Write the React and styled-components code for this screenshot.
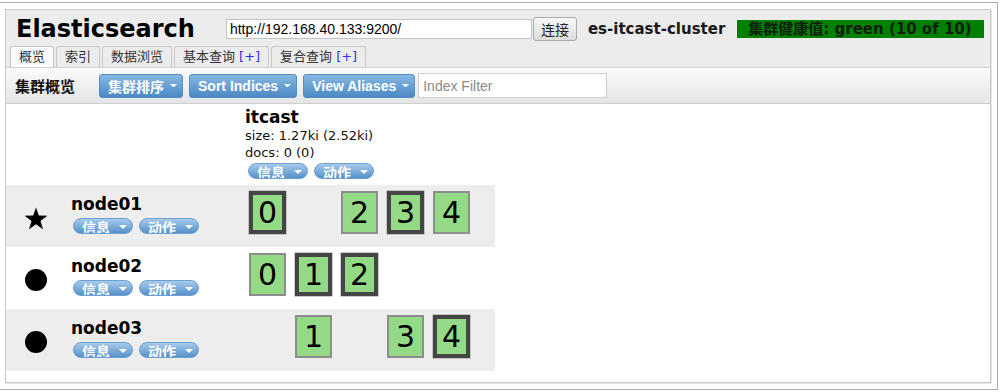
import React from 'react';
import styled, { createGlobalStyle } from 'styled-components';

const GlobalStyle = createGlobalStyle`
  html, body {
    margin: 0;
    padding: 0;
    background: #ffffff;
    font-family: "DejaVu Sans", "Noto Sans CJK SC", sans-serif;
    color: #000;
  }
`;

const CJK = `"DejaVu Sans", "Noto Sans CJK SC", sans-serif`;
const ARIAL_CJK = `"Liberation Sans", "Noto Sans CJK SC", sans-serif`;

const Frame = styled.div`
  box-sizing: border-box;
  width: 999px;
  height: 388px;
  margin: 2px 0 0 -1px;
  padding: 6px 0 0 5px;
  border: 1px solid #a9a9a9;
`;

const Panel = styled.div`
  box-sizing: border-box;
  width: 986px;
  height: 374px;
  border: 1px solid #c9c9c9;
  box-shadow: 1px 1px 0 #e4e4e4;
  display: flex;
  flex-direction: column;
  background: #fff;
`;

const Header = styled.div`
  background: #ececec;
  padding: 4px 0 0 4px;
`;

const TopRow = styled.div`
  display: flex;
  align-items: center;
  height: 30px;
  padding-left: 6px;
`;

const Title = styled.h1`
  margin: 0 31px 0 0;
  font-size: 24px;
  line-height: 30px;
  font-weight: bold;
  font-family: "DejaVu Sans", sans-serif;
`;

const UrlInput = styled.input`
  box-sizing: border-box;
  width: 306px;
  height: 20px;
  border: 1px solid #c4c4c4;
  padding: 0 3px;
  font-family: "Liberation Sans", Arial, sans-serif;
  font-size: 14px;
  color: #000;
  background: #fff;
  outline: none;
`;

const ConnectButton = styled.button`
  box-sizing: border-box;
  height: 24px;
  width: 44px;
  margin-left: 1px;
  padding: 0;
  border: 1px solid #ababab;
  border-radius: 3px;
  background: linear-gradient(#f8f8f8, #dcdcdc);
  font-family: "Noto Sans CJK SC", sans-serif;
  font-size: 14px;
  color: #222;
`;

const ClusterName = styled.span`
  margin-left: 11px;
  font-size: 15px;
  font-weight: bold;
  color: #1a1a1a;
`;

const Health = styled.span`
  margin-left: 12px;
  height: 18px;
  line-height: 18px;
  padding: 0 12px 0 11px;
  background: #008000;
  color: #102010;
  font-size: 15px;
  font-weight: bold;
  font-family: ${CJK};
`;

const Tabs = styled.div`
  display: flex;
  gap: 2px;
  margin-top: 2px;
  height: 21px;
`;

const Tab = styled.div`
  box-sizing: border-box;
  height: 21px;
  padding: 0 8px;
  border: 1px solid #c8c8c8;
  border-bottom: none;
  border-radius: 3px 3px 0 0;
  background: ${(p) => (p.$active ? '#fafafa' : '#ececec')};
  font-family: ${CJK};
  font-size: 13px;
  line-height: 20px;
  color: #333;
`;

const Plus = styled.span`
  color: #3030f0;
  margin-left: 4px;
`;

const Toolbar = styled.div`
  box-sizing: border-box;
  height: 37px;
  display: flex;
  align-items: center;
  padding-left: 9px;
  border-top: 1px solid #cfcfcf;
  border-bottom: 1px solid #cfcfcf;
  background: linear-gradient(#fbfbfb, #e3e5e7);
`;

const ToolbarLabel = styled.span`
  font-family: ${CJK};
  font-size: 15px;
  font-weight: bold;
  margin-right: 24px;
  color: #111;
`;

const MenuButton = styled.button`
  box-sizing: border-box;
  height: 24px;
  display: flex;
  align-items: center;
  gap: 6px;
  padding: 0 5px 0 8px;
  margin-right: ${(p) => p.$gap || 6}px;
  border: 1px solid #5a8cbf;
  border-radius: 3px;
  background: linear-gradient(#86b8e4, #4c89c4);
  color: #fff;
  font-family: ${ARIAL_CJK};
  font-size: 14px;
  font-weight: bold;
`;

const Caret = ({ size = 7 }) => (
  <svg width={size} height={size / 2} viewBox="0 0 8 4">
    <polygon points="0,0 8,0 4,4" fill="#fff" />
  </svg>
);

const FilterInput = styled.input`
  box-sizing: border-box;
  width: 189px;
  height: 25px;
  border: 1px solid #cdcdcd;
  padding: 0 4px;
  font-family: "Liberation Sans", Arial, sans-serif;
  font-size: 14px;
  background: #fff;
  outline: none;

  &::placeholder {
    color: #8a8a8a;
  }
`;

const Content = styled.div`
  flex: 1;
  background: #fff;
`;

const Grid = styled.div`
  width: 489px;
`;

const Row = styled.div`
  display: grid;
  grid-template-columns: 239px 250px;
  height: ${(p) => p.$height || 62}px;
  background: ${(p) => (p.$shade ? '#ededed' : '#fff')};
`;

const NodeCell = styled.div`
  display: flex;
`;

const IconWrap = styled.div`
  width: 60px;
  display: flex;
  align-items: center;
  justify-content: center;
  padding-top: 4px;
`;

const Dot = styled.div`
  width: 22px;
  height: 22px;
  border-radius: 50%;
  background: #000;
`;

const NodeInfo = styled.div`
  padding: 9px 0 0 5px;
`;

const NodeName = styled.div`
  font-size: 17px;
  line-height: 20px;
  font-weight: bold;
`;

const Pills = styled.div`
  display: flex;
  gap: 6px;
  margin: ${(p) => p.$margin || '4px 0 0 2px'};
`;

const Pill = styled.div`
  box-sizing: border-box;
  width: 60px;
  height: 16px;
  display: flex;
  align-items: flex-start;
  padding: 1px 0 0 8px;
  overflow: hidden;
  border: 1px solid #6d9fcf;
  border-radius: 8px;
  background: linear-gradient(#a6cbec, #5691ca);
  color: #fff;
  font-family: ${CJK};
  font-size: 14px;
  line-height: 16px;
  font-weight: bold;

  svg {
    margin: 5px 0 0 9px;
    flex: none;
  }
`;

const IndexHead = styled.div`
  padding-top: 3px;
`;

const IndexName = styled.div`
  font-size: 17px;
  line-height: 20px;
  font-weight: bold;
`;

const IndexStat = styled.div`
  font-size: 13px;
  line-height: 17px;
  color: #111;
`;

const ShardCell = styled.div`
  display: flex;
  gap: 9px;
  padding: 6px 0 0 4px;
`;

const Shard = styled.div`
  box-sizing: border-box;
  width: 37px;
  height: 43px;
  display: flex;
  align-items: center;
  justify-content: center;
  border: ${(p) => (p.$primary ? '4px solid #454545' : '2px solid #8d8d8d')};
  box-shadow: ${(p) => (p.$primary ? '0 0 0 0.5px #9a9a9a' : 'none')};
  background: #94d985;
  font-size: 30px;
  line-height: 1;
  color: #000;
  visibility: ${(p) => (p.$empty ? 'hidden' : 'visible')};
`;

const Star = () => (
  <svg width="24" height="23" viewBox="0 0 24 23">
    <polygon
      points="12,0.5 14.8,8.6 23.4,8.7 16.5,13.9 19,22.3 12,17.3 5,22.3 7.5,13.9 0.6,8.7 9.2,8.6"
      fill="#000"
    />
  </svg>
);

const nodes = [
  { name: 'node01', master: true, shards: [[0, true], null, [2, false], [3, true], [4, false]] },
  { name: 'node02', shards: [[0, false], [1, true], [2, true], null, null] },
  { name: 'node03', shards: [null, [1, false], null, [3, false], [4, true]] },
];

function PillButtons({ margin }) {
  return (
    <Pills $margin={margin}>
      <Pill>
        信息
        <Caret size={8} />
      </Pill>
      <Pill>
        动作
        <Caret size={8} />
      </Pill>
    </Pills>
  );
}

function App() {
  return (
    <>
      <GlobalStyle />
      <Frame>
        <Panel>
          <Header>
            <TopRow>
              <Title>Elasticsearch</Title>
              <UrlInput defaultValue="http://192.168.40.133:9200/" />
              <ConnectButton>连接</ConnectButton>
              <ClusterName>es-itcast-cluster</ClusterName>
              <Health>集群健康值: green (10 of 10)</Health>
            </TopRow>
            <Tabs>
              <Tab $active>概览</Tab>
              <Tab>索引</Tab>
              <Tab>数据浏览</Tab>
              <Tab>
                基本查询<Plus>[+]</Plus>
              </Tab>
              <Tab>
                复合查询<Plus>[+]</Plus>
              </Tab>
            </Tabs>
          </Header>
          <Toolbar>
            <ToolbarLabel>集群概览</ToolbarLabel>
            <MenuButton>
              集群排序
              <Caret />
            </MenuButton>
            <MenuButton>
              Sort Indices
              <Caret />
            </MenuButton>
            <MenuButton $gap={3}>
              View Aliases
              <Caret />
            </MenuButton>
            <FilterInput placeholder="Index Filter" />
          </Toolbar>
          <Content>
            <Grid>
              <Row $height={81}>
                <div />
                <IndexHead>
                  <IndexName>itcast</IndexName>
                  <IndexStat>size: 1.27ki (2.52ki)</IndexStat>
                  <IndexStat>docs: 0 (0)</IndexStat>
                  <PillButtons margin="2px 0 0 3px" />
                </IndexHead>
              </Row>
              {nodes.map((node, i) => (
                <Row key={node.name} $shade={i % 2 === 0}>
                  <NodeCell>
                    <IconWrap>{node.master ? <Star /> : <Dot />}</IconWrap>
                    <NodeInfo>
                      <NodeName>{node.name}</NodeName>
                      <PillButtons />
                    </NodeInfo>
                  </NodeCell>
                  <ShardCell>
                    {node.shards.map((s, j) =>
                      s ? (
                        <Shard key={j} $primary={s[1]}>
                          {s[0]}
                        </Shard>
                      ) : (
                        <Shard key={j} $empty />
                      )
                    )}
                  </ShardCell>
                </Row>
              ))}
            </Grid>
          </Content>
        </Panel>
      </Frame>
    </>
  );
}

export default App;
